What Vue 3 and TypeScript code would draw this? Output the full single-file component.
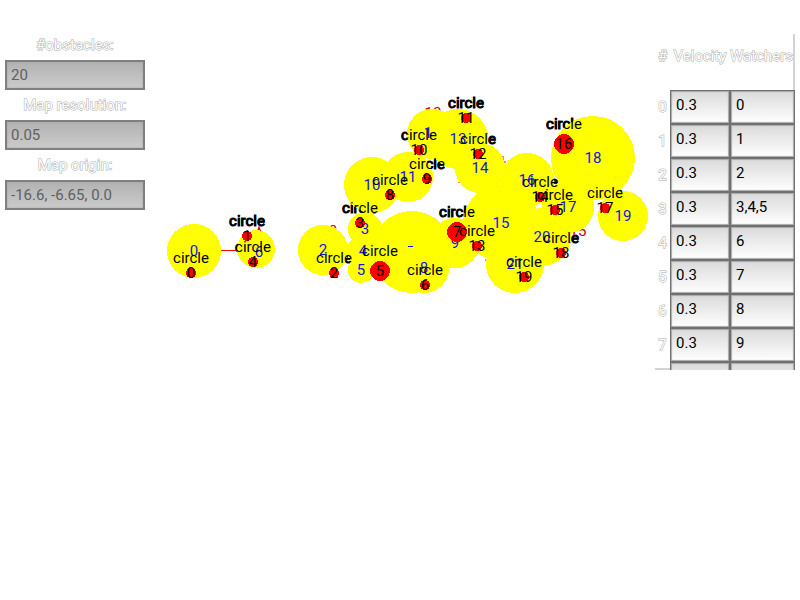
<script setup lang="ts">
interface Disc { x: number; y: number; r: number; label: string; dx?: number; dy?: number }
interface Obstacle { id: number; x: number; y: number; r: number }
interface Row { id: number; velocity: string; watchers: string }

const settings = [
  { id: 'obstacles', label: '#obstacles:', value: '20' },
  { id: 'resolution', label: 'Map resolution:', value: '0.05' },
  { id: 'origin', label: 'Map origin:', value: '-16.6, -6.65, 0.0' },
]

const rows: Row[] = ['0', '1', '2', '3,4,5', '6', '7', '8', '9', ''].map((watchers, id) => ({
  id,
  velocity: watchers ? '0.3' : '',
  watchers,
}))

const discs: Disc[] = [
  { x: 194, y: 251, r: 27, label: '0' },
  { x: 256, y: 249, r: 19, label: '6', dx: 3, dy: 3 },
  { x: 323, y: 250, r: 25, label: '2' },
  { x: 365, y: 229, r: 17, label: '3' },
  { x: 363, y: 251, r: 16, label: '4' },
  { x: 361, y: 270, r: 13, label: '5' },
  { x: 412, y: 252, r: 41, label: '' },
  { x: 424, y: 268, r: 25, label: '8' },
  { x: 455, y: 243, r: 25, label: '9' },
  { x: 372, y: 185, r: 28, label: '10' },
  { x: 408, y: 177, r: 25, label: '11' },
  { x: 432, y: 134, r: 25, label: '1', dx: -4, dy: -1 },
  { x: 458, y: 139, r: 30, label: '13' },
  { x: 480, y: 168, r: 25, label: '14' },
  { x: 501, y: 223, r: 38, label: '15' },
  { x: 527, y: 180, r: 27, label: '16' },
  { x: 568, y: 207, r: 26, label: '17' },
  { x: 593, y: 158, r: 42, label: '18' },
  { x: 623, y: 216, r: 25, label: '19' },
  { x: 542, y: 237, r: 29, label: '20' },
  { x: 515, y: 264, r: 29, label: '21' },
]

const obstacles: Obstacle[] = [
  { id: 0, x: 191, y: 273, r: 5 },
  { id: 1, x: 247, y: 236, r: 5 },
  { id: 2, x: 334, y: 273, r: 5 },
  { id: 3, x: 360, y: 223, r: 5 },
  { id: 4, x: 253, y: 262, r: 5 },
  { id: 5, x: 380, y: 271, r: 10 },
  { id: 6, x: 425, y: 285, r: 5 },
  { id: 7, x: 457, y: 232, r: 10 },
  { id: 8, x: 390, y: 195, r: 5 },
  { id: 9, x: 427, y: 179, r: 5 },
  { id: 10, x: 419, y: 150, r: 5 },
  { id: 11, x: 466, y: 118, r: 5 },
  { id: 12, x: 478, y: 154, r: 5 },
  { id: 13, x: 477, y: 246, r: 5 },
  { id: 14, x: 540, y: 197, r: 5 },
  { id: 15, x: 555, y: 210, r: 5 },
  { id: 16, x: 564, y: 144, r: 10 },
  { id: 17, x: 605, y: 208, r: 5 },
  { id: 18, x: 561, y: 253, r: 5 },
  { id: 19, x: 524, y: 277, r: 5 },
]

// The shape name sits just above its obstacle
const nameY = (o: Obstacle): number => o.y - o.r - 5
</script>

<template>
  <main class="app">
    <form class="settings">
      <div v-for="s in settings" :key="s.id" class="field">
        <label :for="s.id">{{ s.label }}</label>
        <input :id="s.id" type="text" :value="s.value" disabled />
      </div>
    </form>

    <svg class="map" viewBox="150 0 505 370" role="img" aria-label="Obstacle map">
      <g class="under">
        <text v-for="o in obstacles" :key="o.id" :x="o.x" :y="nameY(o)">circle</text>
      </g>
      <g class="edges">
        <path d="M221 250.500H238M503 156v4M504 162h2M485 260h1M459 182v1" />
        <path class="tip" d="M257 231l2 -6l2 6z" />
        <text x="433" y="118">12</text>
        <text x="333" y="236">2</text>
        <text x="578" y="236">15</text>
      </g>
      <g class="discs">
        <circle v-for="(d, i) in discs" :key="i" :cx="d.x" :cy="d.y" :r="d.r" />
      </g>
      <g class="ids">
        <text v-for="(d, i) in discs" :key="i" :x="d.x + (d.dx ?? 0)" :y="d.y + 5 + (d.dy ?? 0)">{{ d.label }}</text>
        <path d="M408 246.500h5" />
      </g>
      <g class="dots">
        <circle v-for="o in obstacles" :key="o.id" :cx="o.x" :cy="o.y" :r="o.r" />
      </g>
      <g class="names">
        <template v-for="o in obstacles" :key="o.id">
          <text :x="o.x" :y="nameY(o)">circle</text>
          <text :x="o.x" :y="o.y + 5">{{ o.id }}</text>
        </template>
      </g>
    </svg>

    <section class="watchers">
      <table>
        <thead>
          <tr><th class="num">#</th><th class="velocity">Velocity</th><th>Watchers</th></tr>
        </thead>
        <tbody>
          <tr v-for="r in rows" :key="r.id">
            <th class="num">{{ r.id < 8 ? r.id : '' }}</th>
            <td><input type="text" :value="r.velocity" :aria-label="`Velocity ${r.id}`" /></td>
            <td><input type="text" :value="r.watchers" :aria-label="`Watchers ${r.id}`" /></td>
          </tr>
        </tbody>
      </table>
    </section>
  </main>
</template>

<style>
body {
  margin: 0;
  background: #fff;
}
</style>

<style scoped>
.app {
  display: grid;
  grid-template-columns: 150px minmax(0, 1fr) 140px;
  align-items: start;
  padding-right: 5px;
  font: 15px/20px Roboto, "Liberation Sans", sans-serif;
}
.settings {
  padding: 30px 5px 0;
}
.field {
  height: 60px;
}
label,
th {
  color: #fff;
  font-weight: 400;
  -webkit-text-stroke: 1px #a8a8a8;
  paint-order: stroke fill;
}
label {
  display: block;
  height: 30px;
  line-height: 30px;
  text-align: center;
}
input {
  box-sizing: border-box;
  display: block;
  width: 100%;
  margin: 0;
  border-radius: 0;
  font: inherit;
  outline: none;
}
.settings input {
  height: 30px;
  padding: 0 4px;
  border: 2px solid #7f7f7f;
  background: linear-gradient(#b2b2b2, #cbcbcb);
  box-shadow: inset 0 0 2px #a0a0a0;
  color: #606060;
}
.map {
  display: block;
  width: 100%;
  height: auto;
}
.map text {
  text-anchor: middle;
}
.under {
  stroke: #000;
  stroke-width: 1;
}
.edges text {
  fill: #d00000;
}
.edges path {
  fill: none;
  stroke: red;
}
.edges .tip {
  fill: red;
  stroke: none;
}
.discs {
  fill: #ff0;
  shape-rendering: crispEdges;
}
.ids {
  fill: #1414e0;
}
.ids path {
  stroke: #1414e0;
}
.dots {
  fill: red;
  shape-rendering: crispEdges;
}
.watchers {
  height: 336px;
  margin-top: 34px;
  overflow: hidden;
}
table {
  width: 100%;
  table-layout: fixed;
  border-collapse: separate;
  border-spacing: 0;
}
th,
td {
  box-sizing: border-box;
  height: 34px;
  padding: 0;
}
th {
  white-space: nowrap;
}
thead th {
  height: 56px;
  padding-bottom: 12px;
}
thead th:last-child {
  border-right: 2px solid #d3d3d3;
}
.num {
  width: 15px;
}
.velocity {
  width: 60px;
}
tbody tr:last-child th {
  background: linear-gradient(#d3d3d3, #d3d3d3) 0 6px / 100% 2px no-repeat;
}
td input {
  height: 34px;
  padding: 0 5px 4px;
  border: 1px solid #707070;
  background: linear-gradient(#dadada, #fff);
  box-shadow: inset 0 0 1px 1px #a8a8a8;
  color: #000;
}
</style>
